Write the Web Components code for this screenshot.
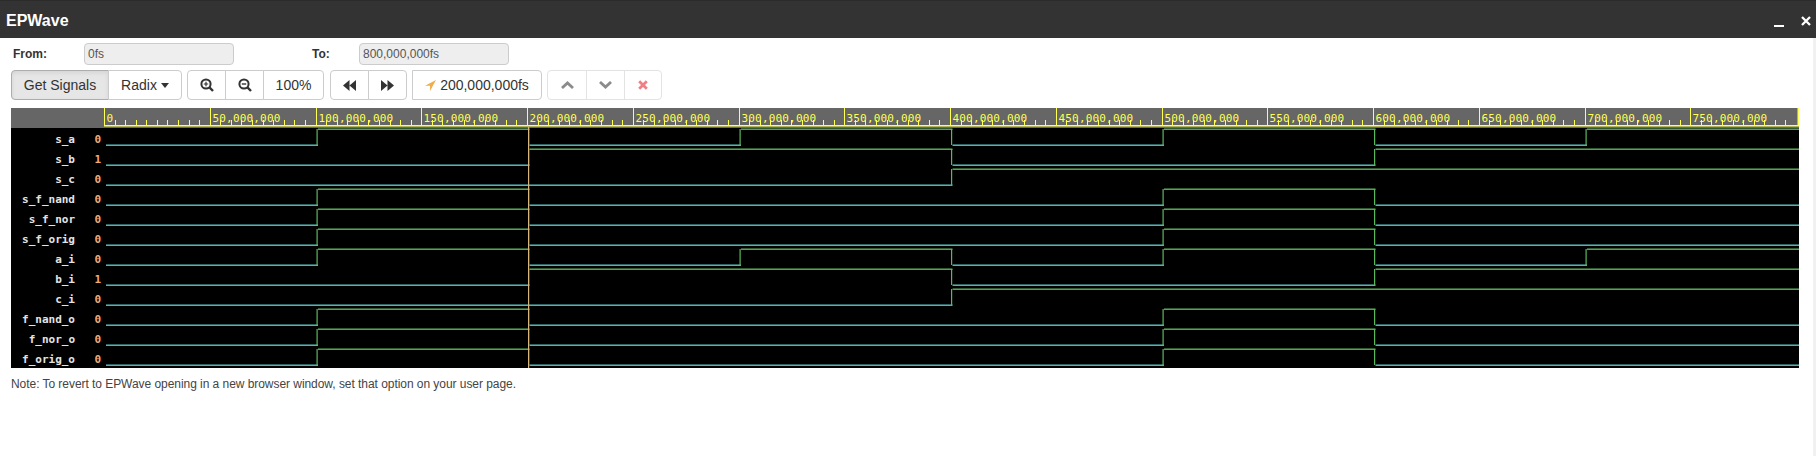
<!DOCTYPE html>
<html><head><meta charset="utf-8"><style>
html,body{margin:0;padding:0;background:#fff;overflow:hidden}
body{width:1816px;height:456px;font-family:"Liberation Sans",Arial,sans-serif}
</style></head><body>
<ep-window></ep-window>
<script>
const ICONS={
 plus:'<svg width="14" height="14" viewBox="0 0 14 14"><circle cx="6" cy="6" r="4.6" fill="none" stroke="#333" stroke-width="2"/><path d="M9.2 9.2L13 13" stroke="#333" stroke-width="2.4"/><path d="M3.8 6h4.400M6 3.800v4.400" stroke="#333" stroke-width="1.200"/></svg>',
 minus:'<svg width="14" height="14" viewBox="0 0 14 14"><circle cx="6" cy="6" r="4.6" fill="none" stroke="#333" stroke-width="2"/><path d="M9.2 9.2L13 13" stroke="#333" stroke-width="2.4"/><path d="M3.800 6h4.400" stroke="#333" stroke-width="1.400"/></svg>',
 back:'<svg width="13" height="11" viewBox="0 0 13 11"><path d="M6.500 0v11L0 5.500zM13 0v11L6.500 5.500z" fill="#333"/></svg>',
 fwd:'<svg width="13" height="11" viewBox="0 0 13 11"><path d="M0 0v11l6.500-5.500zM6.500 0v11L13 5.500z" fill="#333"/></svg>',
 arrow:'<svg width="11" height="11" viewBox="0 0 11 11"><path d="M11 0L0 5.800h5V11z" fill="#f0ad4e"/></svg>',
 up:'<svg width="13" height="8" viewBox="0 0 13 8"><path d="M1 7l5.500-5 5.500 5" fill="none" stroke="#8c8c8c" stroke-width="2.800"/></svg>',
 down:'<svg width="13" height="8" viewBox="0 0 13 8"><path d="M1 1l5.500 5 5.500-5" fill="none" stroke="#8c8c8c" stroke-width="2.800"/></svg>',
 x:'<svg width="10" height="10" viewBox="0 0 10 10"><path d="M1.200 1.200l7.600 7.600M8.800 1.200L1.200 8.800" stroke="#ee7f85" stroke-width="2.800"/></svg>'
};
customElements.define('ep-title',class extends HTMLElement{constructor(){super();this.attachShadow({mode:'open'}).innerHTML=`<style>
:host{display:flex;align-items:center;justify-content:space-between;height:38px;background:#333;border-top:1px solid #2b2b2b;color:#fff;box-sizing:border-box;padding:2px 5px 0 6px}
b{font:bold 16px "Liberation Sans",sans-serif}
.c{display:flex;align-items:center;gap:17px}
</style><b><slot></slot></b><span class="c"><svg width="10" height="12" viewBox="0 0 10 12"><rect y="10" width="10" height="2" fill="#fff"/></svg><svg width="10" height="10" viewBox="0 0 10 10"><path d="M1 1l8 8M9 1L1 9" stroke="#fff" stroke-width="2.300"/></svg></span>`}});
customElements.define('ep-range',class extends HTMLElement{constructor(){super();this.attachShadow({mode:'open'}).innerHTML=`<style>
:host{display:grid;grid-template-columns:71px 150px 78px 47px 150px;align-items:center;height:22px;padding-left:13px;font:12px "Liberation Sans",sans-serif;color:#333}
label{font-weight:bold;font-size:12px}
i{font-style:normal;display:block;box-sizing:border-box;height:22px;line-height:20px;background:#eee;border:1px solid #ccc;border-radius:4px;padding-left:3px;color:#555;font-size:12px}
</style><label>From:</label><i>0fs</i><span></span><label>To:</label><i>800,000,000fs</i>`}});
customElements.define('ep-group',class extends HTMLElement{constructor(){super();this.attachShadow({mode:'open'}).innerHTML=`<style>
:host{display:flex;height:30px}
::slotted(ep-btn){margin-left:-1px}
::slotted(ep-btn:first-child){margin-left:0;border-radius:4px 0 0 4px}
::slotted(ep-btn:last-child){border-radius:0 4px 4px 0}
</style><slot></slot>`}});
customElements.define('ep-btn',class extends HTMLElement{constructor(){super();const n=this.getAttribute('icon');this.attachShadow({mode:'open'}).innerHTML=`<style>
:host{display:flex;align-items:center;justify-content:center;gap:4px;box-sizing:border-box;height:30px;border:1px solid #ccc;background:#fff;color:#333;font:14px "Liberation Sans",sans-serif;white-space:nowrap}
:host([active]){background:#e6e6e6;border-color:#adadad;box-shadow:inset 0 2px 4px rgba(0,0,0,.08)}
:host([dim]){border-color:#e3e3e3}
</style>${n?ICONS[n]:''}<slot></slot>`}});
customElements.define('ep-toolbar',class extends HTMLElement{constructor(){super();this.attachShadow({mode:'open'}).innerHTML=`<style>
:host{display:flex;gap:5px;height:30px;padding-left:11px;margin-top:5px}
</style><slot></slot>`}});
const RAW={a:[0,1,0,1,0,1,0,1],b:[0,0,1,1,0,0,1,1],c:[0,0,0,0,1,1,1,1],f:[0,1,0,0,0,1,0,0]};
const SIGS=[['s_a','0','a'],['s_b','1','b'],['s_c','0','c'],['s_f_nand','0','f'],['s_f_nor','0','f'],['s_f_orig','0','f'],['a_i','0','a'],['b_i','1','b'],['c_i','0','c'],['f_nand_o','0','f'],['f_nor_o','0','f'],['f_orig_o','0','f']];
customElements.define('ep-wave',class extends HTMLElement{constructor(){super();
 const W=1788,S=2.115,xAt=t=>94+t*S;
 let s='';
 s+=`<rect width="${W}" height="20" fill="#666"/><rect y="20" width="${W}" height="240" fill="#000"/><rect x="93" y="17" width="${W-93}" height="1.500" fill="#ff5"/>`;
 for(let k=0;k<16;k++){const x=Math.round(xAt(k*50));
  s+=`<rect x="${x-1}" width="1" height="18" fill="#ff5"/>`;
  s+=`<text x="${x+1.500}" y="14" class="r">${(k*50000000).toLocaleString('en-US')}</text>`;
  for(let m=1;m<10;m++){const tx=Math.round(xAt(k*50+m*5));if(tx<W)s+=`<rect x="${tx-1}" y="12" width="1" height="5" fill="#ff5"/>`}
 }
 s+=`<rect x="${W-1.500}" width="1.500" height="18" fill="#ff5"/>`;
 SIGS.forEach((g,i)=>{
  const lo=37+i*20,hi=lo-16,v=RAW[g[2]];
  s+=`<text x="64" y="${lo-2}" class="n" text-anchor="end">${g[0]}</text><text x="86.700" y="${lo-2}" class="v" text-anchor="middle">${g[1]}</text>`;
  let start=0;
  for(let k=1;k<=8;k++){
   if(k==8||v[k]!=v[start]){
    const x1=start?xAt(start*100)+1.500:95,x2=k==8?W:xAt(k*100)+1.500;
    s+=`<rect x="${x1}" y="${(v[start]?hi:lo)-.5}" width="${x2-x1}" height="1.400" fill="${v[start]?'#5cb85c':'#5bc8c8'}"/>`;
    if(k<8)s+=`<rect x="${xAt(k*100)}" y="${hi}" width="1.200" height="16" fill="#5cb85c"/>`;
    start=k;
   }
  }
 });
 s+=`<rect x="${xAt(200)}" y="19" width="1.200" height="241" fill="#d8b77c"/>`;
 this.attachShadow({mode:'open'}).innerHTML=`<style>
 :host{display:block;margin:8px 0 0 11px;height:260px}
 svg{display:block}
 .r{font:11px "DejaVu Sans Mono",monospace;fill:#ff5;letter-spacing:.18px}
 .n{font:bold 11px "DejaVu Sans Mono",monospace;fill:#e4e4e4}
 .v{font:bold 11px "DejaVu Sans Mono",monospace;fill:#f0ad78}
 </style><svg width="${W}" height="260">${s}</svg>`}});
customElements.define('ep-note',class extends HTMLElement{constructor(){super();this.attachShadow({mode:'open'}).innerHTML=`<style>
:host{display:block;margin:9px 0 0 11px;font:12px/14px "Liberation Sans",sans-serif;color:#444;letter-spacing:-.05px}
</style><slot></slot>`}});
customElements.define('ep-window',class extends HTMLElement{constructor(){super();this.attachShadow({mode:'open'}).innerHTML=`<style>
:host{display:block;position:relative;width:1816px;height:456px;background:#fff}
.sb{position:absolute;right:0;top:38px;width:3px;height:418px;background:#f1f1f1}
.gap{height:5px}
</style>
<ep-title>EPWave</ep-title>
<div class="gap"></div>
<ep-range></ep-range>
<ep-toolbar>
 <ep-group><ep-btn active style="width:98px">Get Signals</ep-btn><ep-btn style="width:74px">Radix<svg width="8" height="5" viewBox="0 0 8 5"><path d="M0 0h8L4 5z" fill="#333"/></svg></ep-btn></ep-group>
 <ep-group><ep-btn icon="plus" style="width:39px"></ep-btn><ep-btn icon="minus" style="width:39px"></ep-btn><ep-btn style="width:61px">100%</ep-btn></ep-group>
 <ep-group style="margin-left:1px"><ep-btn icon="back" style="width:39px"></ep-btn><ep-btn icon="fwd" style="width:39px"></ep-btn></ep-group>
 <ep-group><ep-btn icon="arrow" style="width:130px">200,000,000fs</ep-btn></ep-group>
 <ep-group><ep-btn icon="up" dim style="width:40px"></ep-btn><ep-btn icon="down" dim style="width:39px"></ep-btn><ep-btn icon="x" dim style="width:38px"></ep-btn></ep-group>
</ep-toolbar>
<ep-wave></ep-wave>
<ep-note>Note: To revert to EPWave opening in a new browser window, set that option on your user page.</ep-note>
<div class="sb"></div>`}});
</script></body></html>
